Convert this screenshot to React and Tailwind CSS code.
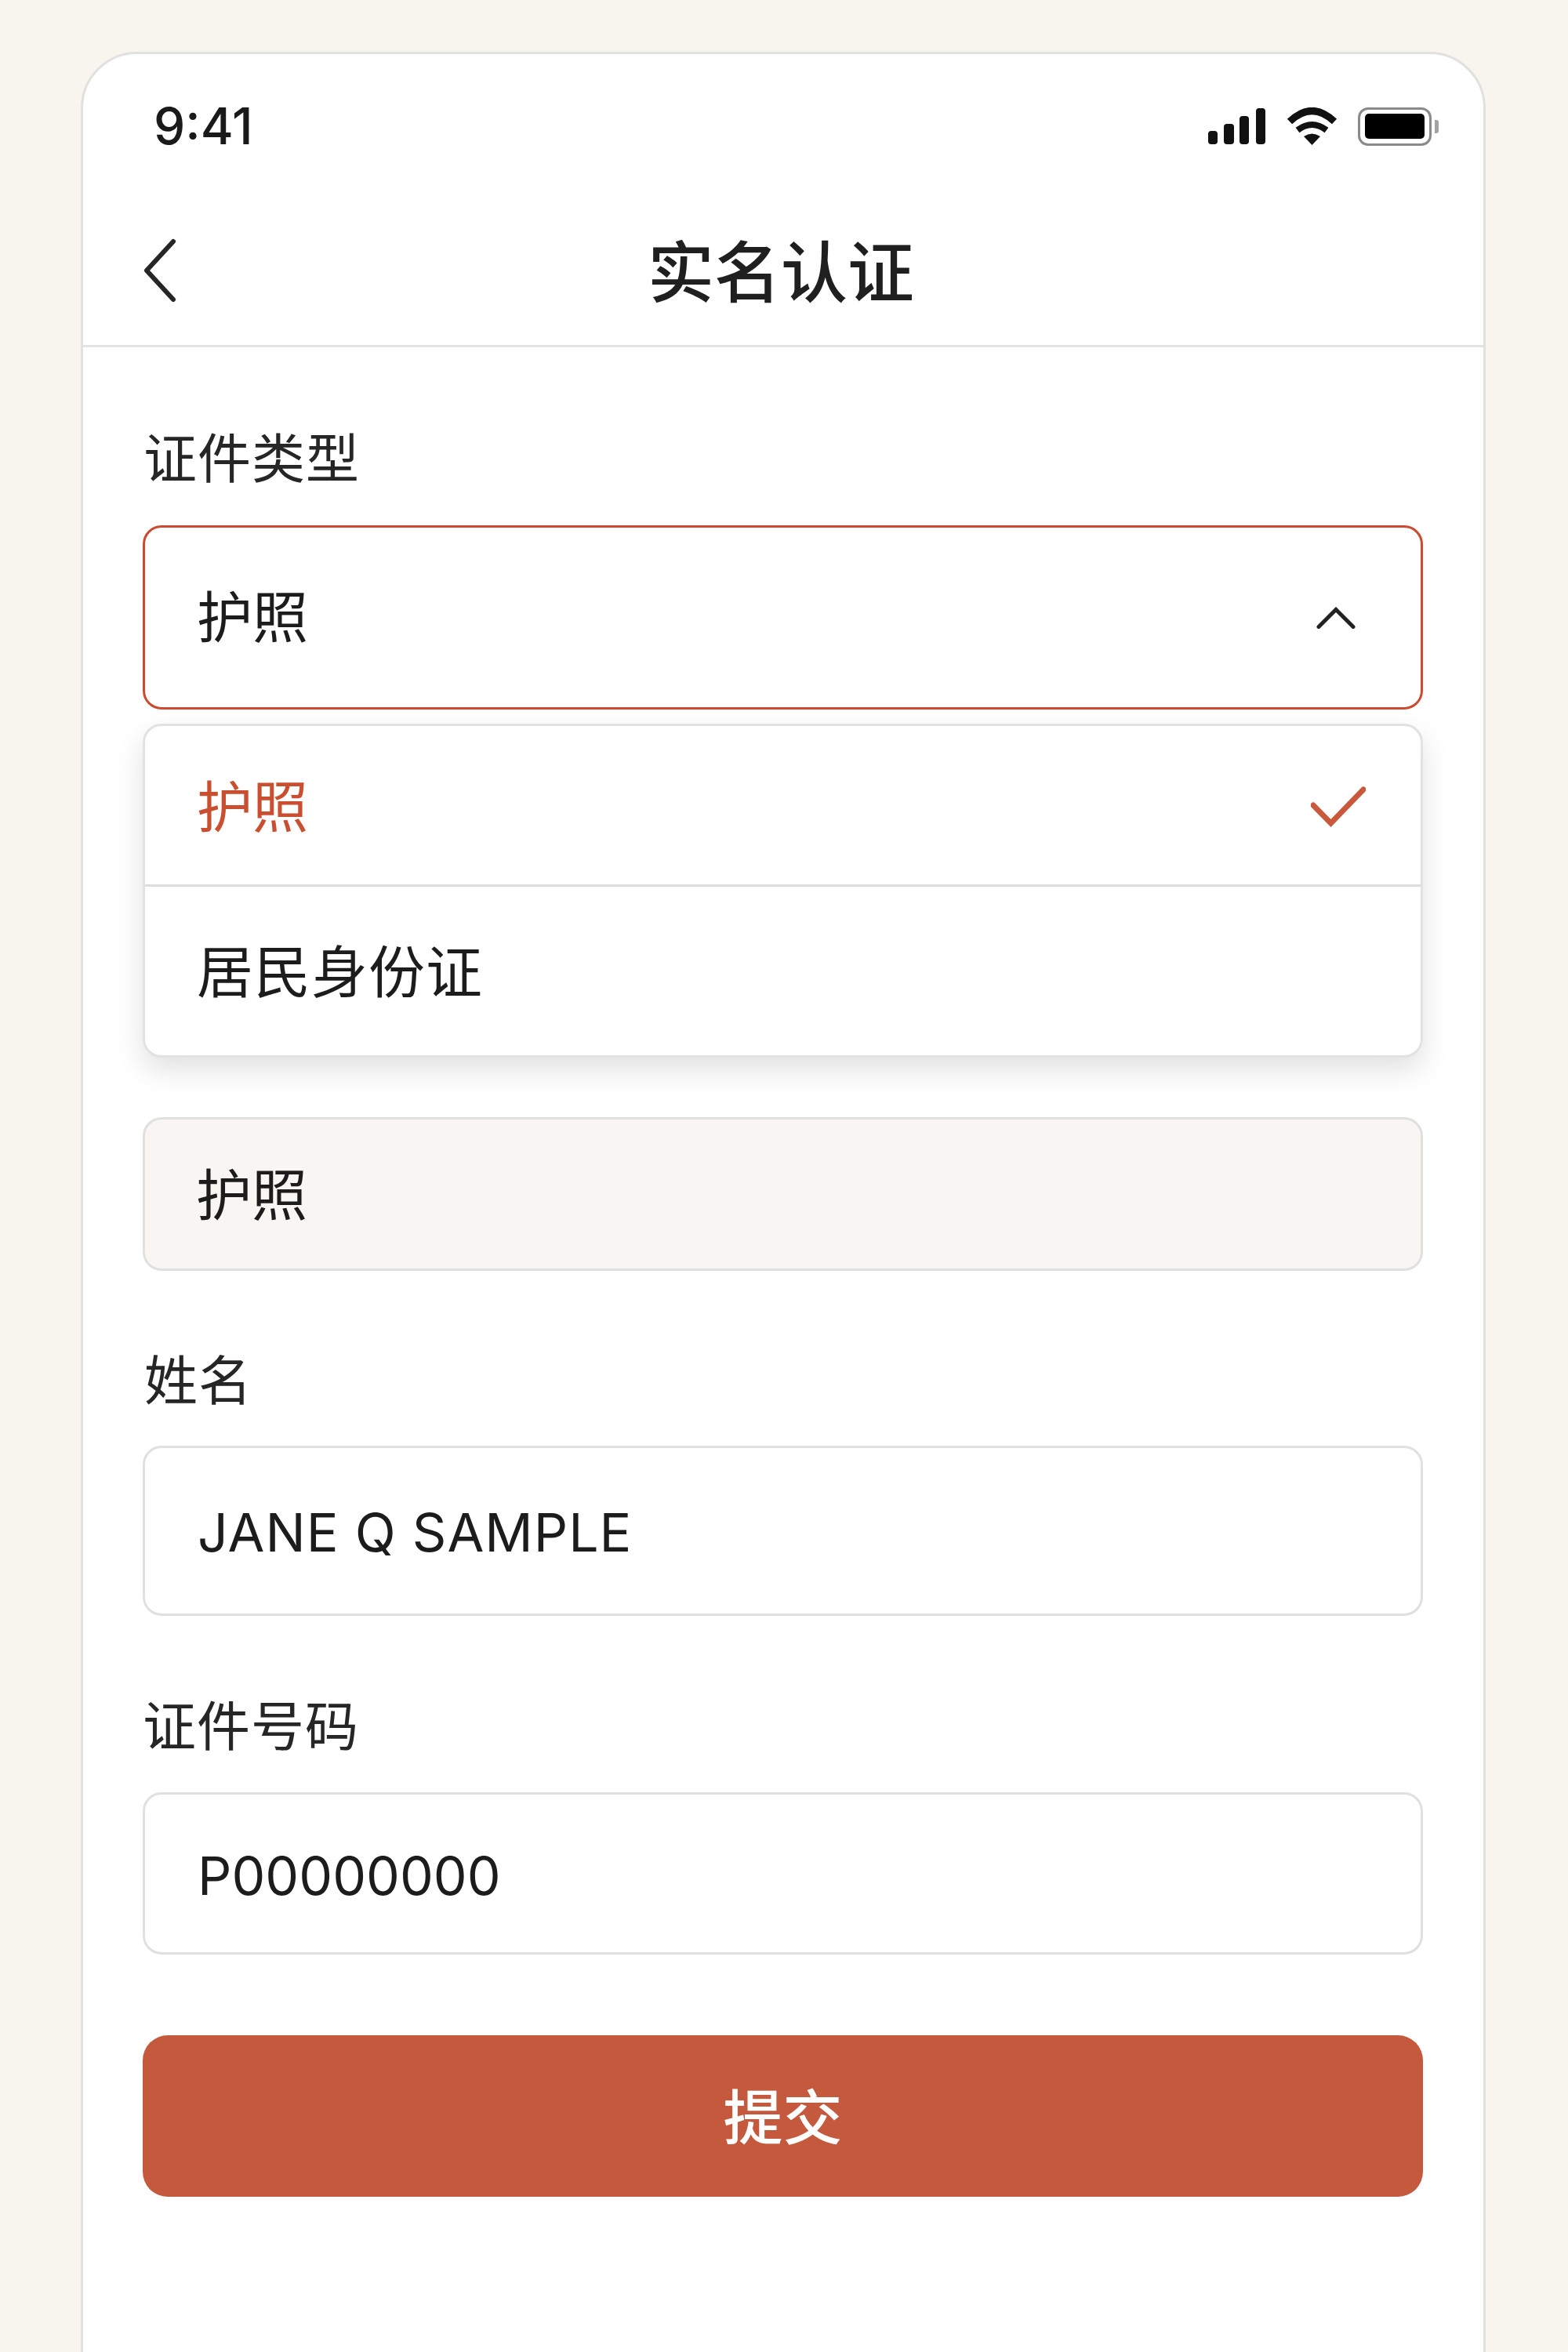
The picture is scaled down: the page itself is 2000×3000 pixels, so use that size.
const sans = "font-['Inter','Noto_Sans_CJK_SC',sans-serif]";

function StatusIcons() {
  return (
    <div className="flex items-center">
      <svg width="73" height="46" viewBox="0 0 73 46" fill="#111">
        <rect x="0" y="29" width="12" height="17" rx="4" />
        <rect x="20" y="20" width="13" height="26" rx="4" />
        <rect x="40" y="10" width="12" height="36" rx="4" />
        <rect x="61" y="0" width="12" height="46" rx="4" />
      </svg>
      <svg className="ml-[27px]" width="65" height="48" viewBox="0 0 65 48" fill="none">
        <path d="M4 18Q32.5 -9 61 18" stroke="#111" strokeWidth="9" />
        <path d="M14 29Q32.5 15 51 29" stroke="#111" strokeWidth="8" />
        <path d="M32.5 48L22 37Q32.5 30 43 37Z" fill="#111" />
      </svg>
      <div className="ml-[26px] flex items-center">
        <div className="flex h-[49px] w-[94px] items-center justify-center rounded-[13px] border-[3px] border-[#8a8a8a]">
          <div className="h-[32px] w-[76px] rounded-[5px] bg-black" />
        </div>
        <div className="ml-[4px] h-[17px] w-[5px] rounded-r-[3px] bg-[#a3a3a3]" />
      </div>
    </div>
  );
}

function Label({ children, className = "" }) {
  return <div className={`text-[68px] leading-[66px] tracking-[1px] text-[#262626] ${className}`}>{children}</div>;
}

function Field({ children, className = "" }) {
  return (
    <div className={`flex items-center rounded-[24px] border-[3px] border-[#e0e0de] text-[#1c1c1c] ${className}`}>
      {children}
    </div>
  );
}

export default function App() {
  return (
    <div className={`h-[3000px] overflow-hidden bg-[#f8f4ee] pt-[66px] pr-[105px] pl-[103px] ${sans}`}>
      <div className="h-[3000px] rounded-t-[72px] border-[3px] border-[#e1e1df] bg-white">
        <div className="flex h-[130px] items-center justify-between pt-[54px] pr-[57px] pl-[90px]">
          <span className="text-[64px] leading-[70px] font-medium text-[#1a1a1a]">9:41</span>
          <StatusIcons />
        </div>

        <div className="grid h-[244px] grid-cols-[1fr_auto_1fr] items-center border-b-[3px] border-[#e3e3e1] pt-[58px]">
          <button type="button" className="mb-[8px] ml-[75px] justify-self-start">
            <svg className="block" width="46" height="82" viewBox="0 0 46 82" fill="none">
              <path d="M40 4L6 41L40 78" stroke="#262626" strokeWidth="6" strokeLinecap="round" strokeLinejoin="round" />
            </svg>
          </button>
          <h1 className="mr-[6px] text-[85px] leading-[90px] font-medium text-[#1f1f1f]">实名认证</h1>
          <div />
        </div>

        <div className="pt-[109px] pr-[77px] pl-[76px]">
          <Label className="pl-[1px]">证件类型</Label>

          <div className="mt-[52px] flex h-[235px] items-center justify-between rounded-[24px] border-[3px] border-[#cb4a30] pr-[83px] pl-[66px] text-[#1c1c1c]">
            <span className="text-[71px]">护照</span>
            <svg width="50" height="28" viewBox="0 0 50 28" fill="none">
              <path d="M3 25.5L25 3.5L47 25.5" stroke="#222" strokeWidth="5" strokeLinecap="round" strokeLinejoin="miter" />
            </svg>
          </div>

          <div className="mt-[18px] h-[426px] rounded-[24px] border-[3px] border-[#e2e2e2] bg-white shadow-[0_16px_36px_rgba(0,0,0,0.12)]">
            <div className="flex h-[205px] items-center justify-between border-b-[3px] border-[#dedede] pt-[4px] pr-[70px] pl-[66px]">
              <span className="text-[71px] text-[#c94f30]">护照</span>
              <svg width="70" height="52" viewBox="0 0 70 52" fill="none">
                <path d="M3 24L25.5 47L67 4" stroke="#c9583c" strokeWidth="7" strokeLinecap="round" strokeLinejoin="miter" />
              </svg>
            </div>
            <div className="flex h-[215px] items-center pt-[2px] pl-[66px]">
              <span className="text-[72px] tracking-[1px] text-[#1c1c1c]">居民身份证</span>
            </div>
          </div>

          <Field className="mt-[76px] h-[196px] bg-[#f9f5f2] pt-[2px] pl-[65px] text-[71px]">护照</Field>

          <Label className="mt-[107px] pl-[2px]">姓名</Label>
          <Field className="mt-[50px] h-[217px] pt-[2px] pl-[67px] text-[68px] tracking-[1px]">JANE Q SAMPLE</Field>

          <Label className="mt-[108px]">证件号码</Label>
          <Field className="mt-[51px] h-[207px] pt-[4px] pl-[67px] text-[68px]">P00000000</Field>

          <button
            type="button"
            className="mt-[103px] h-[206px] w-full rounded-[32px] bg-[#c4593e] pt-[4px] text-[76px] font-medium text-white"
          >
            提交
          </button>
        </div>
      </div>
    </div>
  );
}
